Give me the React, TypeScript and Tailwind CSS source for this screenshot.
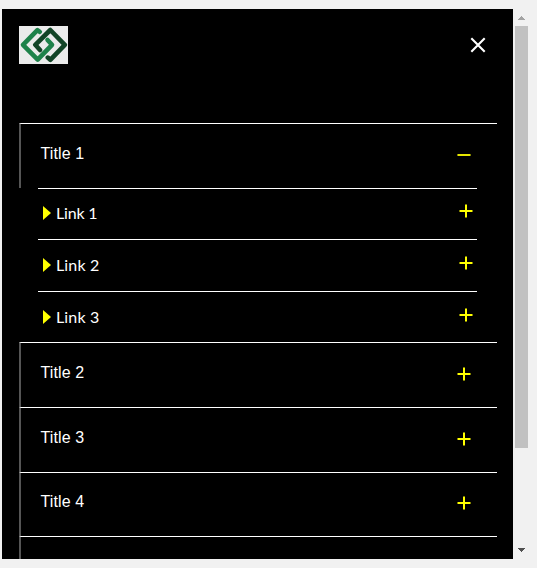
import React from "react";

function Sign({ minus = false }: { minus?: boolean }) {
  return (
    <svg width="14" height="14" viewBox="0 0 14 14" shapeRendering="crispEdges" className="block shrink-0">
      <path d="M1 6h12v2H1z" fill={minus ? "#e6e600" : "#ffff00"} />
      <path d="M0 6h1v2H0zM13 6h1v2h-1z" fill="#808000" />
      {!minus && (
        <>
          <path d="M6 1h2v12H6z" fill="#ffff00" />
          <path d="M6 0h2v1H6zM6 13h2v1H6z" fill="#808000" />
        </>
      )}
    </svg>
  );
}

function Logo() {
  return (
    <svg width="49" height="38" viewBox="0 0 49 38" fill="none" strokeWidth="4.6" strokeLinecap="round" strokeLinejoin="round" className="block bg-[#ebebeb]">
      <path d="M21 24 16.3 18.8 31.3 4 45.8 18.8 31.3 33.8 28.8 31.6" stroke="#124426" />
      <path d="M20.8 5.8 18.4 4.2 4 18.8 18.7 33.6 33 18.8 28.5 14" stroke="#1e824a" />
    </svg>
  );
}

function TitleRow({ label, height, padding = "pt-[18px]", signPadding = "pt-6", open = false }: { label: string; height: string; padding?: string; signPadding?: string; open?: boolean }) {
  return (
    <div className={`${height} flex shrink-0 items-start justify-between border-l-2 border-t border-l-[#555555] border-t-white pl-[19.5px] pr-[26px]`}>
      <span className={`${padding} leading-6 tracking-[0.1px]`}>{label}</span>
      <span className={signPadding}>
        <Sign minus={open} />
      </span>
    </div>
  );
}

function LinkRow({ digit, height, offset = "pt-px", tracking = "tracking-[0.15px]" }: { digit: string; height: string; offset?: string; tracking?: string }) {
  return (
    <div className={`${height} ${offset} mr-5 ml-[19px] flex shrink-0 items-start border-t border-white pl-[5px] pr-1`}>
      <svg width="8" height="14" viewBox="0 0 8 14" className="mt-[17px] block">
        <path d="M0 0 8 7 0 14Z" fill="#ffff00" />
      </svg>
      <span className={`${tracking} grow pt-3 pl-[5px] font-['Lato',sans-serif] text-base leading-6`}>Link {digit}</span>
      <span className="pt-[15px]">
        <Sign />
      </span>
    </div>
  );
}

export default function App() {
  return (
    <div className="flex h-[568px] w-[537px] bg-[#f1f1f1] pt-[9px] pl-0.5 font-['Liberation_Sans',Arial,sans-serif] text-base text-white">
      <main className="flex h-[550px] w-[511px] flex-col overflow-hidden bg-black pr-4 pl-[17px]">
        <header className="flex h-[114px] shrink-0 items-start justify-between pt-[17px] pr-[11px]">
          <Logo />
          <svg width="16" height="16" viewBox="0 0 16 16" className="mt-[11px] block">
            <path d="M1.3 1.3 14.7 14.7M14.7 1.3 1.3 14.7" stroke="white" strokeWidth="2.1" />
          </svg>
        </header>
        <TitleRow label="Title 1" height="h-[65px]" open />
        <LinkRow digit="1" height="h-[51px]" offset="pt-0" tracking="tracking-[-0.2px]" />
        <LinkRow digit="2" height="h-[52px]" />
        <LinkRow digit="3" height="h-[51px]" />
        <TitleRow label="Title 2" height="h-[65px]" />
        <TitleRow label="Title 3" height="h-[65px]" />
        <TitleRow label="Title 4" height="h-16" padding="pt-[17px]" signPadding="pt-[23px]" />
        <div className="h-[23px] shrink-0 border-l-2 border-t border-l-[#555555] border-t-white" />
      </main>
      <aside className="flex h-[550px] w-[17px] flex-col items-start bg-[#f1f1f1] pl-0.5">
        <svg width="7" height="4" viewBox="0 0 7 4" shapeRendering="crispEdges" className="mt-[7px] mb-1.5 ml-[3px] block">
          <path d="M3 0h1v1h1v1h1v1h1v1H0V3h1V2h1V1h1z" fill="#a3a3a3" />
        </svg>
        <div className="h-[422px] w-[13px] shrink-0 bg-[#c1c1c1]" />
        <div className="grow" />
        <svg width="7" height="4" viewBox="0 0 7 4" shapeRendering="crispEdges" className="mb-[7px] ml-[3px] block">
          <path d="M0 0h7v1H6v1H5v1H4v1H3V3H2V2H1V1H0z" fill="#505050" />
        </svg>
      </aside>
    </div>
  );
}
